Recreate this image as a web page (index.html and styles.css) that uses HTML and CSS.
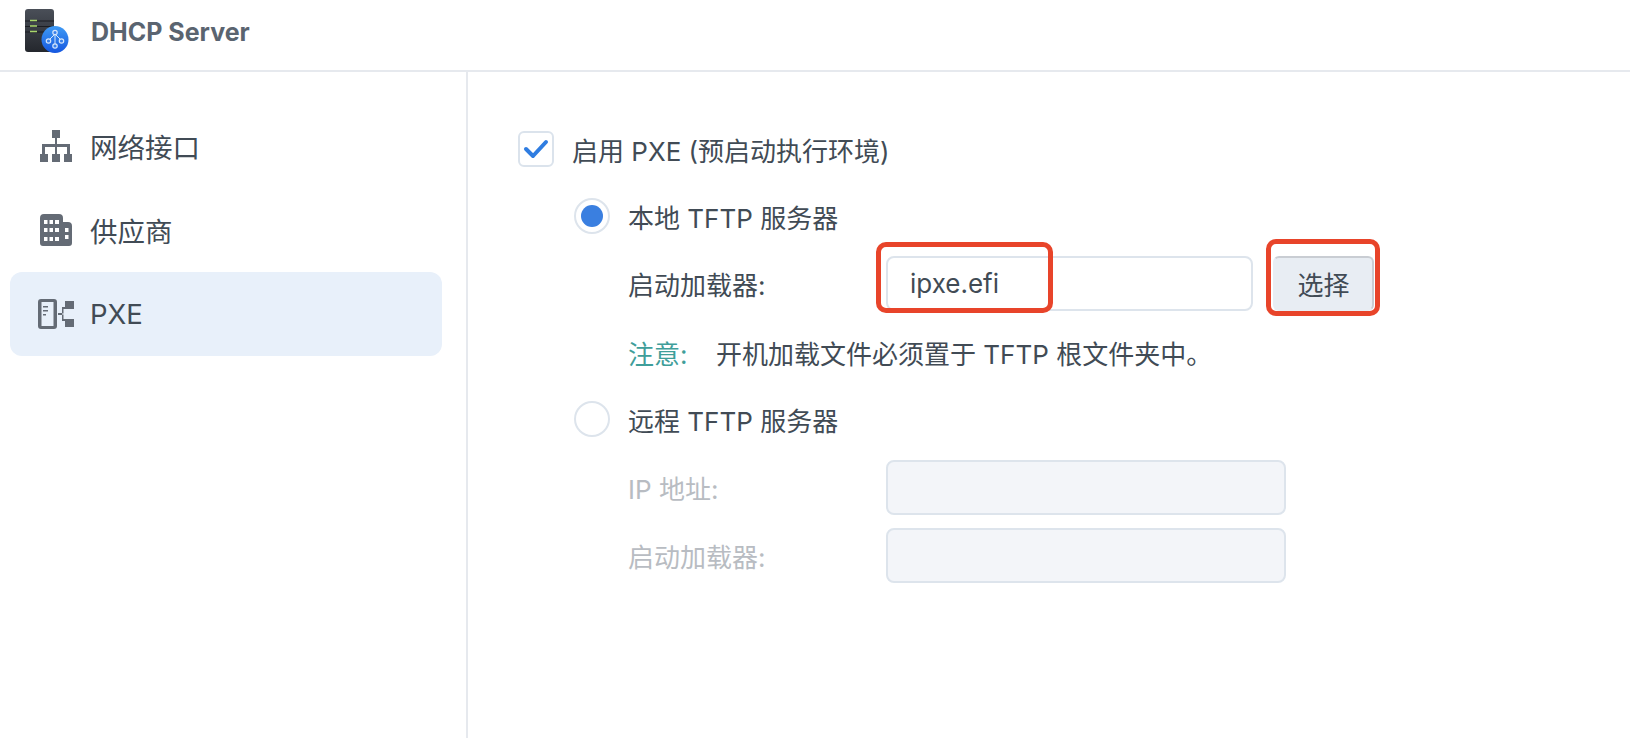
FILE: index.html
```html
<!DOCTYPE html>
<html lang="zh-CN">
<head>
<meta charset="UTF-8">
<title>DHCP Server</title>
<link rel="stylesheet" href="styles.css">
</head>
<body>
<header class="topbar">
    <svg class="app-logo" width="46" height="48" viewBox="0 0 46 48">
        <defs>
            <linearGradient id="body" x1="0" y1="0" x2="0" y2="1">
                <stop offset="0" stop-color="#4a4f58"/>
                <stop offset="1" stop-color="#24272d"/>
            </linearGradient>
            <linearGradient id="badge" x1="0" y1="0" x2="0" y2="1">
                <stop offset="0" stop-color="#3f9bf5"/>
                <stop offset="1" stop-color="#1557e0"/>
            </linearGradient>
        </defs>
        <rect x="0" y="0" width="29" height="43" rx="3" fill="url(#body)"/>
        <path d="M0 12h29M0 17.500h29M0 23h29" stroke="#1b1d22" stroke-width="1"/>
        <path d="M5 11.500h7M5 17h7M5 22.500h7" stroke="#a9d66b" stroke-width="1.500"/>
        <circle cx="30" cy="30.500" r="13.500" fill="url(#badge)"/>
        <path d="M30 24v12M30 25l-6 6M30 25l6 6" stroke="#d5e6fb" stroke-width="1" fill="none"/>
        <g fill="#3a80ea" stroke="#d5e6fb" stroke-width="1.200">
            <circle cx="30" cy="23.500" r="2.200"/>
            <circle cx="23.500" cy="32" r="2.200"/>
            <circle cx="36.500" cy="32" r="2.200"/>
            <circle cx="30" cy="37" r="2.200"/>
        </g>
    </svg>
    <span class="app-title">DHCP Server</span>
</header>

<div class="layout">
    <nav class="sidebar">
        <a class="nav-item">
            <svg class="nav-icon" width="36" height="32" viewBox="0 0 36 32">
                <path d="M14 0h8v8h-8zM17 8h2v6h13v10h-3v-7H19v7h-2v-7H7v7H4V14h13zM2 24h8v8H2zM14 24h8v8h-8zM26 24h8v8h-8z"/>
            </svg>
            <span>网络接口</span>
        </a>
        <a class="nav-item">
            <svg class="nav-icon" width="36" height="32" viewBox="0 0 36 32">
                <path fill-rule="evenodd" d="M6 0h15a4 4 0 0 1 4 4v4h5a4 4 0 0 1 4 4v17a3 3 0 0 1-3 3H5a3 3 0 0 1-3-3V4a4 4 0 0 1 4-4zM6 6v4h3.500V6zM11.500 6v4H15V6zM17 6v4h4V6zM6 14v4h3.500v-4zM11.500 14v4H15v-4zM17 14v4h4v-4zM6 23v4h3.500v-4zM11.500 23v4H15v-4zM17 23v4h4v-4zM27 14v4h3.500v-4zM27 21v4h3.500v-4z"/>
            </svg>
            <span>供应商</span>
        </a>
        <a class="nav-item active">
            <svg class="nav-icon" width="36" height="32" viewBox="0 0 36 32">
                <path fill-rule="evenodd" d="M3 1h13a3 3 0 0 1 3 3v24a3 3 0 0 1-3 3H3a3 3 0 0 1-3-3V4a3 3 0 0 1 3-3zM3.500 4v24h12V4zM5 8h5v1.500H5zM5 12h5v1.500H5zM5 16h3v1.500H5z"/>
                <path d="M27 3h9v8h-9zM27 21h9v8h-9zM20 15h4v-6h3v2h-1.500v4.500H24v1h1.500V21H27v2h-3v-6h-4z"/>
            </svg>
            <span>PXE</span>
        </a>
    </nav>

    <main class="content">
        <label class="option">
            <span class="checkbox">
                <svg width="26" height="20" viewBox="0 0 26 20"><path d="M3 10l7 7L23 3" fill="none" stroke="#2f7de1" stroke-width="4" stroke-linecap="round" stroke-linejoin="round"/></svg>
            </span>
            <span>启用 PXE (预启动执行环境)</span>
        </label>

        <div class="group group-local">
            <label class="option">
                <span class="radio checked"></span>
                <span>本地 TFTP 服务器</span>
            </label>
            <div class="field field-first">
                <span class="field-label">启动加载器:</span>
                <div class="input-wrap">
                    <input class="text-input short" type="text" value="ipxe.efi">
                    <span class="mark mark-input"></span>
                </div>
                <div class="button-wrap">
                    <button class="btn">选择</button>
                    <span class="mark mark-button"></span>
                </div>
            </div>
            <p class="note"><span class="note-tag">注意:</span><span>开机加载文件必须置于 TFTP 根文件夹中。</span></p>
        </div>

        <div class="group group-remote">
            <label class="option">
                <span class="radio"></span>
                <span>远程 TFTP 服务器</span>
            </label>
            <div class="field field-first disabled">
                <span class="field-label">IP 地址:</span>
                <input class="text-input" type="text" disabled>
            </div>
            <div class="field field-next disabled">
                <span class="field-label">启动加载器:</span>
                <input class="text-input" type="text" disabled>
            </div>
        </div>
    </main>
</div>
</body>
</html>
```

FILE: styles.css
```css
* {
    box-sizing: border-box;
}
html, body {
    height: 100%;
}
body {
    margin: 0;
    display: flex;
    flex-direction: column;
    background: #fff;
    color: #414b55;
    font-family: Inter, "Noto Sans CJK SC", sans-serif;
    font-size: 26px;
    overflow: hidden;
}
.topbar {
    height: 72px;
    flex: none;
    display: flex;
    align-items: flex-start;
    padding: 9px 0 0 25px;
    border-bottom: 2px solid #e6e9ee;
}
.app-logo {
    flex: none;
}
.app-title {
    margin: 6px 0 0 20px;
    color: #5a6470;
    font-size: 25px;
    font-weight: 700;
    line-height: 34px;
}
.layout {
    flex: 1;
    display: flex;
}
.sidebar {
    width: 468px;
    flex: none;
    padding: 32px 24px 0 10px;
    border-right: 2px solid #e6e9ee;
}
.nav-item {
    height: 84px;
    display: flex;
    align-items: center;
    gap: 16px;
    padding-left: 28px;
    border-radius: 12px;
    font-size: 27.500px;
}
.nav-item.active {
    background: #e8f0fa;
}
.nav-icon {
    flex: none;
    fill: #646b75;
}
.content {
    flex: 1;
    padding: 59px 0 0 50px;
}
.option {
    height: 36px;
    display: flex;
    align-items: center;
    gap: 18px;
}
.checkbox {
    width: 36px;
    height: 36px;
    flex: none;
    display: flex;
    align-items: center;
    justify-content: center;
    border: 2px solid #dbe3ec;
    border-radius: 6px;
}
.radio {
    width: 36px;
    height: 36px;
    flex: none;
    display: flex;
    align-items: center;
    justify-content: center;
    border: 2px solid #dde4ec;
    border-radius: 50%;
}
.radio.checked::after {
    content: "";
    width: 22px;
    height: 22px;
    border-radius: 50%;
    background: #3a7fe0;
}
.group {
    margin-left: 56px;
}
.group-local {
    margin-top: 31px;
}
.group-remote {
    margin-top: 34px;
}
.field {
    display: flex;
    align-items: center;
    margin-left: 54px;
}
.field-first {
    margin-top: 22px;
}
.group-remote .field-first {
    margin-top: 23px;
}
.field-next {
    margin-top: 13px;
}
.field-label {
    width: 258px;
    flex: none;
}
.field.disabled .field-label {
    color: #b8bcc2;
}
.input-wrap, .button-wrap {
    position: relative;
}
.text-input {
    width: 400px;
    height: 55px;
    padding: 0 22px;
    border: 2px solid #dde4ec;
    border-radius: 8px;
    background: #fff;
    color: #414b55;
    font: inherit;
    outline: none;
}
.text-input.short {
    display: block;
    width: 367px;
}
.text-input:disabled {
    background: #f3f5f9;
}
.button-wrap {
    margin-left: 20px;
}
.btn {
    display: block;
    width: 101px;
    height: 55px;
    padding: 0;
    border: 2px solid #e8edf3;
    border-top-color: #c9cdd3;
    border-right-color: #c9cdd3;
    border-radius: 6px;
    background: #e8edf3;
    color: #414b55;
    font: inherit;
}
.mark {
    position: absolute;
    border: 5px solid #e8442a;
    border-radius: 10px;
    pointer-events: none;
}
.mark-input {
    left: -10px;
    top: -14px;
    width: 177px;
    height: 71px;
}
.mark-button {
    left: -7px;
    top: -17px;
    width: 114px;
    height: 77px;
}
.note {
    height: 30px;
    display: flex;
    align-items: center;
    margin: 26px 0 0 54px;
}
.note-tag {
    width: 88px;
    flex: none;
    color: #3f9e9a;
}
```
